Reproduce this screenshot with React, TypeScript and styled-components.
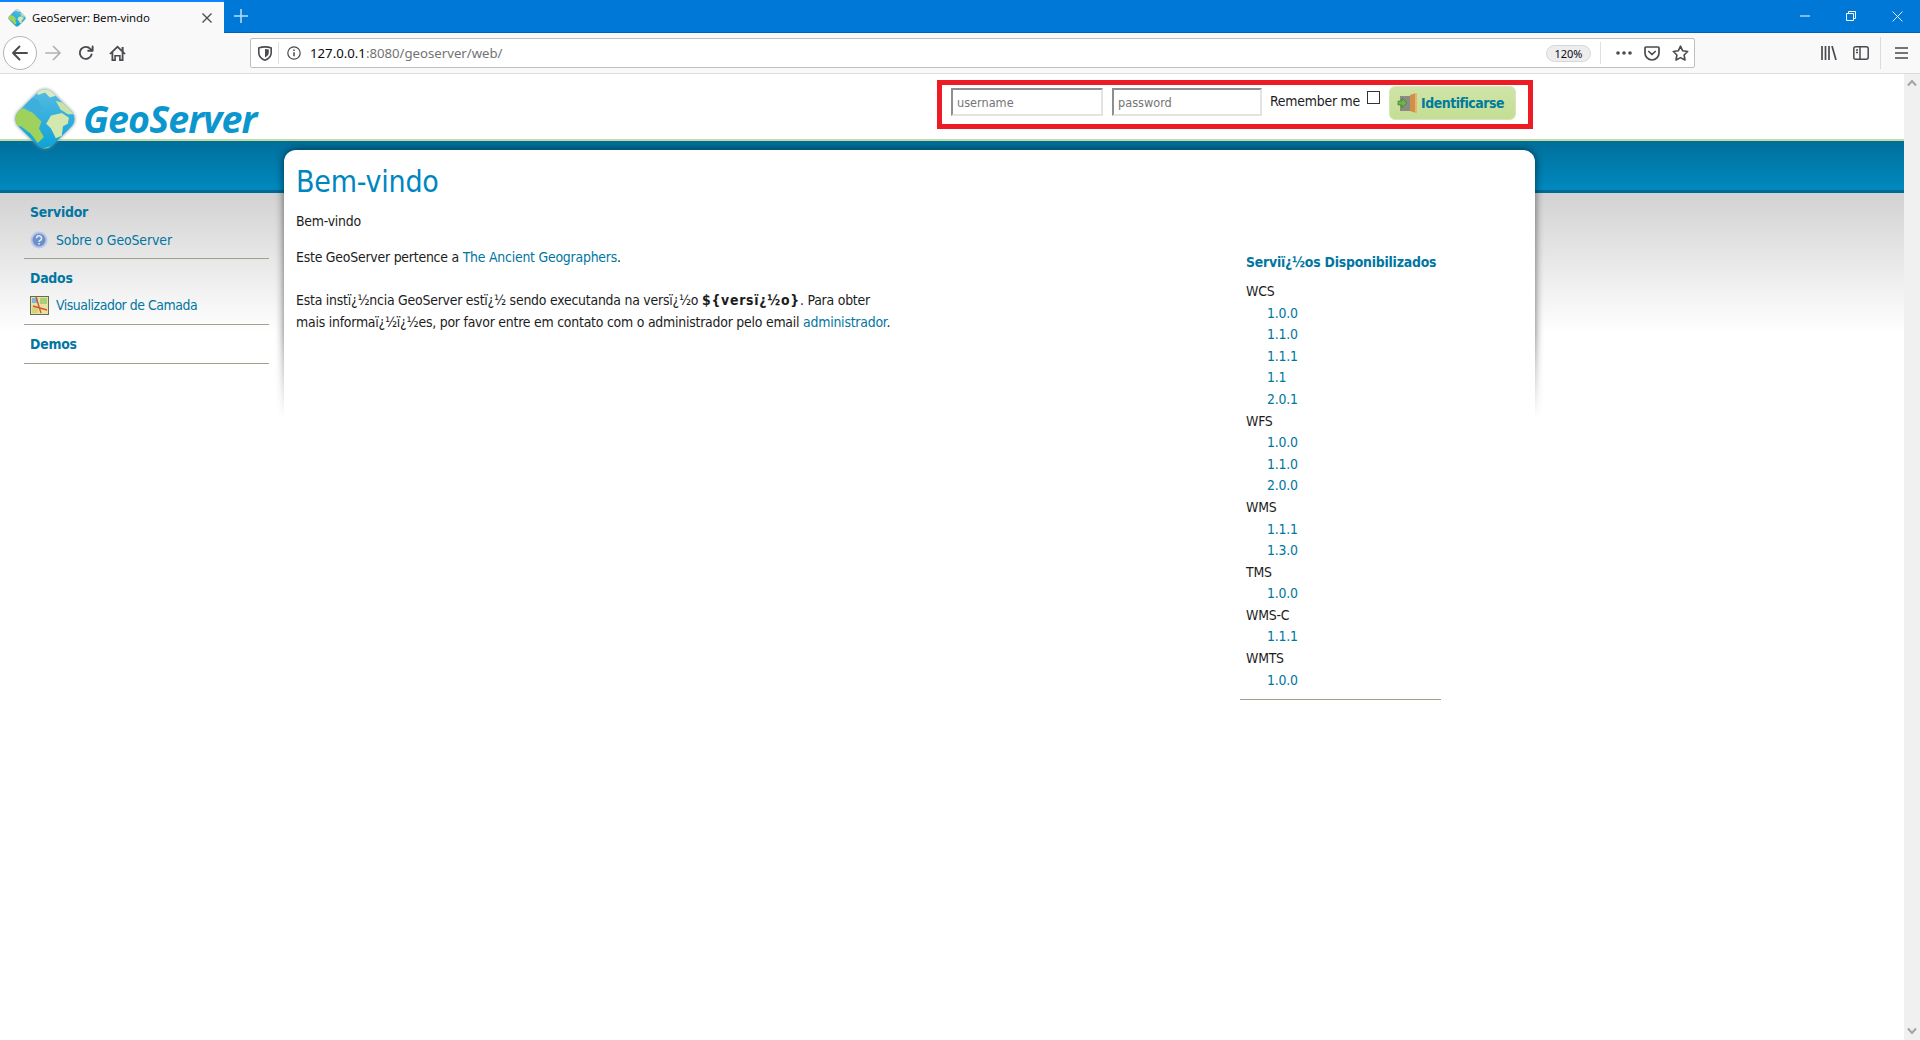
import React from "react";
import styled, { createGlobalStyle } from "styled-components";

const Global = createGlobalStyle`
  html, body { margin: 0; padding: 0; height: 100%; overflow: hidden; background: #fff; }
  * { box-sizing: border-box; }
`;

const PAGE_FONT = `"DejaVu Sans Condensed", "DejaVu Sans", sans-serif`;
const UI_FONT = `"Noto Sans", "Open Sans", sans-serif`;

const Shell = styled.div`
  display: flex; flex-direction: column; width: 1920px; height: 1040px; overflow: hidden;
  font-family: ${PAGE_FONT}; font-size: 13.9px; letter-spacing: -0.22px; line-height: 21.6px; color: #1c1c1c; font-stretch: condensed;
`;

/* Browser chrome */
const TabStrip = styled.div`
  display: flex; height: 33px; flex: none; background: #0078d7; border-bottom: 1px solid #0062b1; align-items: stretch;
`;
const Tab = styled.div`
  display: flex; align-items: center; width: 224px; height: 33px; padding: 0 12px 0 7px; gap: 5px;
  background: #f9f9fa; border-top: 2px solid #0a84ff; font-family: ${UI_FONT}; font-stretch: normal; font-size: 11.4px; letter-spacing: -0.1px; color: #0c0c0d; line-height: 16px;
`;
const TabTitle = styled.span` flex: 1; white-space: nowrap; `;
const NewTab = styled.div` display: flex; align-items: center; justify-content: center; width: 34px; `;
const WindowControls = styled.div`
  margin-left: auto; display: flex; align-items: center;
`;
const WinButton = styled.div` display: flex; align-items: center; justify-content: center; width: 46px; height: 32px; `;

const Toolbar = styled.div`
  display: flex; align-items: center; height: 41px; flex: none; background: #f9f9fa; border-bottom: 1px solid #dcdcde; padding-left: 3px;
`;
const NavButton = styled.div<{ $w?: number; $ring?: boolean }>`
  display: flex; align-items: center; justify-content: center; flex: none;
  width: ${p => p.$w ?? 32}px; height: 34px;
  ${p => p.$ring ? "border: 1px solid #b4b4b4; border-radius: 50%; background: #fff;" : ""}
`;
const UrlBar = styled.div`
  display: flex; align-items: center; flex: none; width: 1445px; height: 30px; margin-left: 117px; margin-right: 118px;
  background: #fff; border: 1px solid #bebebe; border-radius: 2px; padding-left: 7px; padding-right: 0;
  font-family: ${UI_FONT}; font-stretch: normal; font-size: 13.2px; letter-spacing: 0; color: #737373;
`;
const UrlDivider = styled.span` width: 1px; height: 22px; background: #e0e0e1; margin: 0 8px 0 6px; `;
const UrlText = styled.span` margin: 2px 0 0 9px; white-space: nowrap; b { font-weight: 400; color: #0c0c0d; } `;
const ZoomPill = styled.span`
  margin-left: auto; width: 45px; height: 17px; border-radius: 9px; background: #ededf0; border: 1px solid #d7d7db;
  font-size: 11px; line-height: 15px; text-align: center; color: #0c0c0d;
`;
const UrlSep = styled.span` width: 1px; height: 22px; background: #e0e0e1; margin: 0 9px 0 9px; `;
const UrlIcon = styled.span` display: flex; width: 28px; justify-content: center; `;
const ToolDivider = styled.span` width: 1px; height: 32px; background: #dcdcde; margin: 0 4px 0 4px; `;

/* Page */
const Viewport = styled.div` display: flex; flex: 1; min-height: 0; background: #fff; `;
const Page = styled.div` flex: 1; min-width: 0; `;
const Scrollbar = styled.div`
  width: 16px; flex: none; background: #f0f0f0; display: flex; flex-direction: column; justify-content: space-between; align-items: center; padding: 5px 0;
`;
const Header = styled.header`
  display: flex; align-items: flex-start; justify-content: space-between; height: 67px;
  padding: 6px 371px 0 9px; background: #fff; border-bottom: 2px solid #c6dc9e; position: relative; z-index: 2;
`;
const Logo = styled.a` display: flex; align-items: center; gap: 2px; margin-top: 3px; text-decoration: none; `;
const LogoText = styled.span`
  font-family: "Open Sans", sans-serif; font-stretch: normal; font-style: italic; font-weight: 700; font-size: 37.6px; line-height: 50px; letter-spacing: -0.9px; color: #0b97cd;
`;
const LoginForm = styled.form`
  display: flex; align-items: center; width: 596px; height: 49px; padding: 0 0 5px 9px; border: 5px solid #ed1c24;
`;
const TextInput = styled.input<{ $w: number }>`
  width: ${p => p.$w}px; height: 28px; margin-right: 9px; padding: 0 4px; border: 2px solid; border-color: #8e8e8e #e3e3e3 #e3e3e3 #8e8e8e; background: #fff;
  font-family: ${PAGE_FONT}; font-stretch: condensed; font-size: 12.6px;
  &::placeholder { color: #757575; opacity: 1; }
`;
const RememberLabel = styled.label` white-space: nowrap; margin-left: -1px; width: 89px; flex: none; `;
const CheckBox = styled.input`
  appearance: none; width: 13px; height: 13px; margin: 0 9px 10px 8px; border: 1px solid #333; background: #fff; flex: none;
`;
const LoginButton = styled.button`
  display: flex; align-items: center; gap: 3px; width: 127px; height: 34px; margin-top: 2px; padding: 0 0 0 7px; border: 1px solid #d6e6b8; border-radius: 6px;
  background: linear-gradient(#cfe4a7, #c4de94); color: #007a9e;
  font-family: ${PAGE_FONT}; font-stretch: condensed; font-weight: 700; font-size: 13.9px; letter-spacing: -0.45px; white-space: nowrap;
`;

const Main = styled.main`
  display: grid; grid-template-columns: 284px 1251px; align-items: start; height: 899px;
  background:
    linear-gradient(#006f9b 0, #0089bf 49px, #006a94 49px, #006a94 52px) 0 0 / 100% 52px no-repeat,
    linear-gradient(#d2d2d2, #ffffff) 0 52px / 100% 140px no-repeat;
`;
const Sidebar = styled.nav` padding: 60px 15px 0 24px; `;
const NavSection = styled.section`
  padding: 1px 0 7px 6px; margin-bottom: 8px; border-bottom: 1px solid #98a48c;
`;
const NavTitle = styled.h3`
  margin: 0; font-size: 13.9px; line-height: 21.6px; font-weight: 700; color: #0076a1;
`;
const NavLink = styled.a<{ $track: number; $lift?: boolean }>`
  display: flex; align-items: center; gap: ${p => p.$lift ? 7 : 8}px; margin: ${p => p.$lift ? "5px 0 1px" : "6px 0 0"}; color: #0076a1; text-decoration: none; white-space: nowrap;
  letter-spacing: ${p => p.$track}px;
`;
const Card = styled.div` position: relative; margin-top: 9px; isolation: isolate; `;
const ShadowClip = styled.div`
  position: absolute; z-index: -1; top: -12px; left: -12px; right: -12px; height: 280px; overflow: hidden;
  -webkit-mask-image: linear-gradient(#000 70%, transparent 100%); mask-image: linear-gradient(#000 70%, transparent 100%);
  &::before {
    content: ""; position: absolute; top: 12px; left: 12px; right: 12px; height: 400px;
    border-radius: 12px; box-shadow: 0 0 8px rgba(0,0,0,.6);
  }
`;
const Sheet = styled.div`
  display: grid; grid-template-columns: 956px 201px; align-items: start; background: #fff; border-radius: 12px 12px 0 0; min-height: 800px;
`;
const Intro = styled.div` padding: 13px 0 0 12px; `;
const Title = styled.h1`
  margin: 0 0 11px; font-size: 30px; line-height: 37px; font-weight: 400; color: #0086bf;
`;
const Para = styled.p<{ $after?: number }>`
  margin: 0 0 ${p => p.$after ?? 14}px; white-space: nowrap;
`;
const Version = styled.b` letter-spacing: 0.75px; font-weight: 700; `;
const A = styled.a` color: #0076a1; text-decoration: none; `;
const Services = styled.aside` padding: 102px 0 8px; border-bottom: 1px solid #98a48c; `;
const ServicesTitle = styled.h3`
  margin: 0 0 7.4px 6px; font-size: 13.9px; line-height: 21.6px; font-weight: 700; color: #0076a1; white-space: nowrap;
`;
const ServiceList = styled.ul` list-style: none; margin: 0; padding: 0 0 0 6px; `;
const VersionList = styled.ul` list-style: none; margin: 0; padding: 0 0 0 21px; `;

const Ico = styled.svg` display: block; flex: none; `;

const Globe = ({ s }: { s: number }) => (
  <Ico width={s} height={s} viewBox="0 0 60 60">
    <defs>
      <linearGradient id={`g${s}`} x1="0" y1="0" x2="0" y2="1">
        <stop offset="0" stopColor="#5dbde4" /><stop offset="1" stopColor="#06a0d6" />
      </linearGradient>
      <clipPath id={`c${s}`}><rect x="10" y="10" width="40" height="40" rx="9" transform="rotate(45 30 30)" /></clipPath>
    </defs>
    <rect x="9" y="9" width="42" height="42" rx="10" transform="rotate(45 30 30)" fill="#7a8a90" opacity=".5" filter="blur(1px)" />
    <g clipPath={`url(#c${s})`}>
      <rect width="60" height="60" fill={`url(#g${s})`} />
      <path d="M22 2 L42 2 L41 10 L34 12 L30 8 L24 10Z" fill="#d8ebc0" />
      <path d="M0 26 L12 21 L20 25 L27 32 L25 38 L29 45 L24 50 L18 42 L10 36 L0 36Z" fill="#9fd25c" />
      <path d="M12 10 L24 14 L28 21 L21 24 L13 19Z" fill="#3eaedb" />
      <path d="M35 27 L44 25 L50 29 L49 34 L45 36 L44 44 L39 46 L35 38 L31 34Z" fill="#d3e7ae" />
      <path d="M39 15 L48 17 L56 26 L49 26 L43 22Z" fill="#c7e3a8" />
      <path d="M26 55 L34 53 L40 56 L34 60 L26 60Z" fill="#8ccf73" />
    </g>
  </Ico>
);
const Stroke = styled.svg.attrs({ fill: "none" })` display: block; flex: none; `;

const Help = () => (
  <Ico width="18" height="18" viewBox="0 0 18 18">
    <circle cx="9" cy="9" r="8.5" fill="#b9c8e6" />
    <circle cx="9" cy="9" r="6.5" fill="#6d8fcb" />
    <path d="M6.500 7.200a2.500 2.500 0 1 1 3.600 2.300c-.7.300-1.100.7-1.100 1.500" fill="none" stroke="#e4ebf7" strokeWidth="1.500" />
    <rect x="8.200" y="12" width="1.600" height="1.600" fill="#e4ebf7" />
  </Ico>
);
const LayerIcon = () => (
  <Ico width="19" height="19" viewBox="0 0 19 19">
    <rect x=".5" y=".5" width="18" height="18" fill="#e8e2a0" stroke="#5f6f57" />
    <rect x="2" y="2" width="6" height="5" fill="#7fb6e0" />
    <rect x="10" y="2" width="7" height="6" fill="#a8cf7c" />
    <rect x="2" y="11" width="6" height="6" fill="#d6d27c" />
    <path d="M6 1 L11 17 M3 10 L17 14" stroke="#d8532f" strokeWidth="1.4" />
  </Ico>
);
const Door = () => (
  <Ico width="21" height="22" viewBox="0 0 21 22">
    <rect x="3" y="4" width="12" height="15" fill="#8b8b84" />
    <path d="M13 3 L19 1 V21 L13 19Z" fill="#cf9149" />
    <rect x="18" y="1" width="2" height="20" fill="#e9b473" />
    <path d="M1 9 H5 V6 L10 11 L5 16 V13 H1Z" fill="#6bb44a" stroke="#3f7f2d" strokeWidth=".7" />
  </Ico>
);

const I = "#4a4a4f";
const Back = () => (
  <Stroke width="18" height="18" viewBox="0 0 18 18" stroke={I} strokeWidth="1.9" strokeLinecap="round" strokeLinejoin="round">
    <path d="M16 9H2M8.5 2.5 2 9l6.5 6.5" />
  </Stroke>
);
const Forward = () => (
  <Stroke width="18" height="18" viewBox="0 0 18 18" stroke="#b1b1b3" strokeWidth="1.7" strokeLinecap="round" strokeLinejoin="round">
    <path d="M2 9h14M9.5 2.5 16 9l-6.5 6.5" />
  </Stroke>
);
const Reload = () => (
  <Stroke width="16" height="16" viewBox="0 0 16 16" stroke={I} strokeWidth="1.9" strokeLinecap="round" strokeLinejoin="round">
    <path d="M13.6 9.5A6 6 0 1 1 12.4 4L14 5.5" /><path d="M14.6 1.4v4.4h-4.4" />
  </Stroke>
);
const HomeI = () => (
  <Ico width="17" height="17" viewBox="0 0 17 17">
    <path fillRule="evenodd" fill={I} d="M8.5.6 .3 8.4l1.2 1.2L2.5 8.7V16h4.4v-4.6h3.2V16h4.4V8.7l1 .9 1.2-1.2L14.6 6.4V2h-2v2.5zM4.3 7.1 8.5 3.1l4.2 4v7.2h-1V10H5.3v4.3h-1z" />
  </Ico>
);
const Shield = () => (
  <Ico width="14" height="15" viewBox="0 0 14 15">
    <path fillRule="evenodd" fill={I} d="M7 0C4.6 0 2.400.400.500 1.200L0 1.500v5C0 11 3.400 14 7 15c3.600-1 7-4 7-8.500v-5l-.5-.3C11.600.4 9.400 0 7 0zM1.600 2.600C3.200 2 5 1.700 7 1.700s3.800.3 5.400.9v3.900C12.400 10 9.800 12.400 7 13.300 4.200 12.400 1.600 10 1.600 6.500z" />
    <path fill={I} d="M7 3c1.300 0 2.600.2 3.800.6v3C10.800 9 9 10.600 7 11.500z" />
  </Ico>
);
const InfoI = () => (
  <Stroke width="14" height="14" viewBox="0 0 14 14" stroke={I} strokeWidth="1.2">
    <circle cx="7" cy="7" r="6.200" /><path d="M7 6.200v4M7 3.500v1.400" strokeWidth="1.500" />
  </Stroke>
);
const Dots = () => (
  <Ico width="16" height="4" viewBox="0 0 16 4" fill={I}><circle cx="2" cy="2" r="1.800" /><circle cx="8" cy="2" r="1.800" /><circle cx="14" cy="2" r="1.800" /></Ico>
);
const Pocket = () => (
  <Stroke width="16" height="15" viewBox="0 0 16 15" stroke={I} strokeWidth="1.700" strokeLinecap="round" strokeLinejoin="round">
    <path d="M2 1h12a1 1 0 0 1 1 1v5a7 7 0 0 1-14 0V2a1 1 0 0 1 1-1z" /><path d="M4.800 5.500 8 8.500l3.200-3" />
  </Stroke>
);
const Star = () => (
  <Stroke width="17" height="16" viewBox="0 0 17 16" stroke={I} strokeWidth="1.600" strokeLinejoin="round">
    <path d="M8.500 1.200l2.200 4.600 5 .7-3.600 3.500.9 5-4.500-2.400L4 15l.9-5L1.300 6.500l5-.7z" />
  </Stroke>
);
const Library = () => (
  <Stroke width="16" height="14" viewBox="0 0 16 14" stroke={I} strokeWidth="1.700">
    <path d="M1 0v14M4.500 0v14M8 0v14M11 0l4 14" />
  </Stroke>
);
const SidebarI = () => (
  <Stroke width="16" height="14" viewBox="0 0 16 14" stroke={I} strokeWidth="1.500">
    <rect x=".8" y=".8" width="14.400" height="12.400" rx="2" /><path d="M7 1v12" strokeWidth="1.500" /><path d="M3 4h2M3 6.500h2" />
  </Stroke>
);
const Burger = () => (
  <Stroke width="13" height="12" viewBox="0 0 13 12" stroke={I} strokeWidth="1.700"><path d="M0 1h13M0 6h13M0 11h13" /></Stroke>
);
const X = ({ c, s }: { c: string; s: number }) => (
  <Stroke width={s} height={s} viewBox="0 0 10 10" stroke={c} strokeWidth={s > 10 ? ".8" : "1.300"}><path d="M.5.500l9 9M9.500.500l-9 9" /></Stroke>
);

const Arrow = ({ up }: { up?: boolean }) => (
  <Stroke width="10" height="8" viewBox="0 0 10 8" stroke="#a3a3a3" strokeWidth="2">
    <path d={up ? "M1 6.500 5 2l4 4.500" : "M1 1.500 5 6l4-4.500"} />
  </Stroke>
);

const groups: [string, string[]][] = [
  ["WCS", ["1.0.0", "1.1.0", "1.1.1", "1.1", "2.0.1"]],
  ["WFS", ["1.0.0", "1.1.0", "2.0.0"]],
  ["WMS", ["1.1.1", "1.3.0"]],
  ["TMS", ["1.0.0"]],
  ["WMS-C", ["1.1.1"]],
  ["WMTS", ["1.0.0"]],
];

export default function App() {
  return (
    <Shell>
      <Global />
      <TabStrip>
        <Tab>
          <Globe s={20} />
          <TabTitle>GeoServer: Bem-vindo</TabTitle>
          <X c="#4a4a4f" s={10} />
        </Tab>
        <NewTab>
          <Stroke width="14" height="14" viewBox="0 0 14 14" stroke="#bcdcf5" strokeWidth="1.500"><path d="M7 0v14M0 7h14" /></Stroke>
        </NewTab>
        <WindowControls>
          <WinButton><Stroke width="10" height="2" viewBox="0 0 10 2" stroke="#fff"><path d="M0 1h10" /></Stroke></WinButton>
          <WinButton>
            <Stroke width="10" height="10" viewBox="0 0 10 10" stroke="#fff"><path d="M.5 2.500h7v7h-7zM2.500 2.500v-2h7v7h-2" /></Stroke>
          </WinButton>
          <WinButton><X c="#fff" s={11} /></WinButton>
        </WindowControls>
      </TabStrip>
      <Toolbar>
        <NavButton $ring $w={34}><Back /></NavButton>
        <NavButton $w={32}><Forward /></NavButton>
        <NavButton $w={33}><Reload /></NavButton>
        <NavButton $w={31}><HomeI /></NavButton>
        <UrlBar>
          <Shield />
          <UrlDivider />
          <InfoI />
          <UrlText><b>127.0.0.1</b>:8080/geoserver/web/</UrlText>
          <ZoomPill>120%</ZoomPill>
          <UrlSep />
          <UrlIcon><Dots /></UrlIcon>
          <UrlIcon><Pocket /></UrlIcon>
          <UrlIcon><Star /></UrlIcon>
        </UrlBar>
        <NavButton $w={32}><Library /></NavButton>
        <NavButton $w={31}><SidebarI /></NavButton>
        <ToolDivider />
        <NavButton $w={32}><Burger /></NavButton>
      </Toolbar>
      <Viewport>
        <Page>
          <Header>
            <Logo href="#">
              <Globe s={72} />
              <LogoText>GeoServer</LogoText>
            </Logo>
            <LoginForm onSubmit={e => e.preventDefault()}>
              <TextInput $w={152} type="text" placeholder="username" />
              <TextInput $w={150} type="password" placeholder="password" />
              <RememberLabel>Remember me</RememberLabel>
              <CheckBox type="checkbox" />
              <LoginButton type="submit"><Door />Identificarse</LoginButton>
            </LoginForm>
          </Header>
          <Main>
            <Sidebar>
              <NavSection>
                <NavTitle>Servidor</NavTitle>
                <NavLink href="#" $track={-0.1}><Help />Sobre o GeoServer</NavLink>
              </NavSection>
              <NavSection>
                <NavTitle>Dados</NavTitle>
                <NavLink href="#" $track={-0.45} $lift><LayerIcon />Visualizador de Camada</NavLink>
              </NavSection>
              <NavSection>
                <NavTitle><A href="#">Demos</A></NavTitle>
              </NavSection>
            </Sidebar>
            <Card>
              <ShadowClip />
              <Sheet>
                <Intro>
                  <Title>Bem-vindo</Title>
                  <Para>Bem-vindo</Para>
                  <Para $after={22}>Este GeoServer pertence a <A href="#">The Ancient Geographers</A>.</Para>
                  <Para>
                    Esta instï¿½ncia GeoServer estï¿½ sendo executanda na versï¿½o <Version>{"${versï¿½o}"}</Version>. Para obter<br />
                    mais informaï¿½ï¿½es, por favor entre em contato com o administrador pelo email <A href="#">administrador</A>.
                  </Para>
                </Intro>
                <Services>
                  <ServicesTitle>Serviï¿½os Disponibilizados</ServicesTitle>
                  <ServiceList>
                    {groups.map(([name, versions]) => (
                      <li key={name}>
                        {name}
                        <VersionList>
                          {versions.map(v => <li key={v}><A href="#">{v}</A></li>)}
                        </VersionList>
                      </li>
                    ))}
                  </ServiceList>
                </Services>
              </Sheet>
            </Card>
          </Main>
        </Page>
        <Scrollbar><Arrow up /><Arrow /></Scrollbar>
      </Viewport>
    </Shell>
  );
}
